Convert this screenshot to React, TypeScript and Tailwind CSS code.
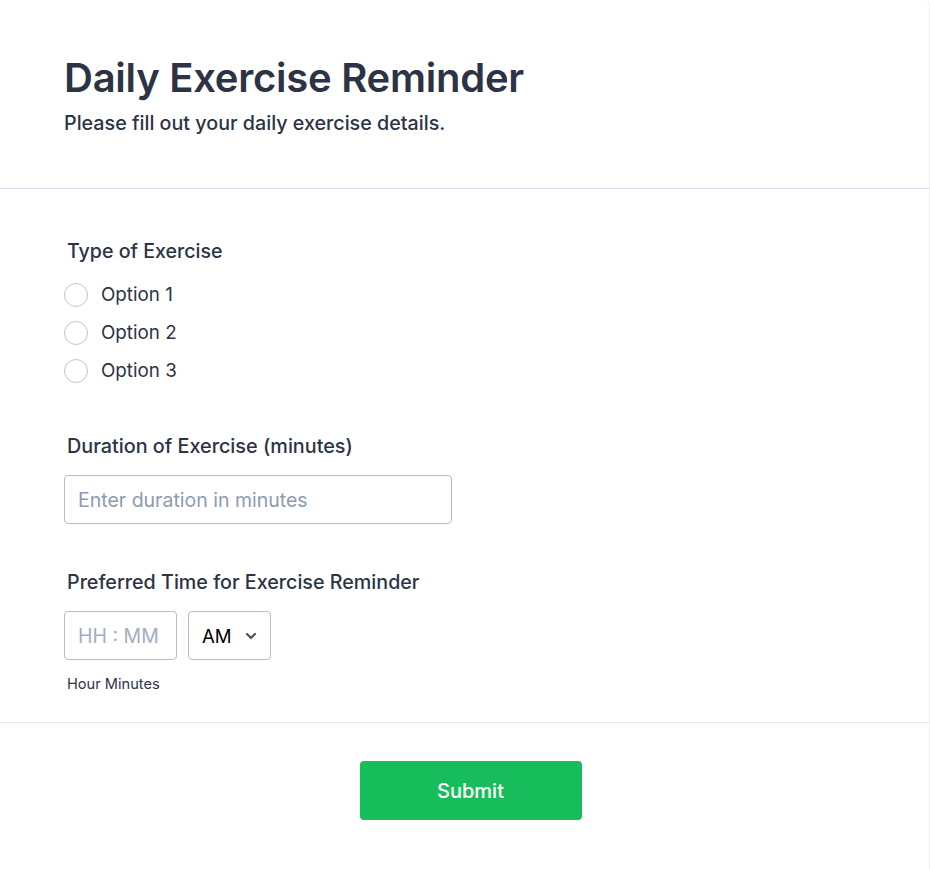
import React from "react";

export default function App() {
  return (
    <div className="min-h-screen bg-white font-['Inter',sans-serif] text-[#2c3345] border-r border-[#eeeef3] rounded-tr-md">
      <header className="px-16 pt-[54px] pb-[51px] border-b border-[#dcdcec]">
        <h1 className="text-[40px] leading-[48px] font-semibold tracking-[-0.25px]">Daily Exercise Reminder</h1>
        <p className="text-[19.7px] leading-[28px] font-medium mt-[7px]">Please fill out your daily exercise details.</p>
      </header>

      <section className="px-16 pt-[50px] pb-[28px] border-b border-[#e6e8ee]">
        <div className="pl-[3px] text-[19.6px] leading-[24px] font-medium">Type of Exercise</div>
        <div className="mt-[13px] flex flex-col">
          {["Option 1", "Option 2", "Option 3"].map((o) => (
            <label key={o} className="h-[38px] flex items-center gap-[13px] text-[18.8px]">
              <span className="w-6 h-6 rounded-full border border-[#bfc4d0] bg-white" />
              <span>{o}</span>
            </label>
          ))}
        </div>

        <div className="mt-[44px] pl-[3px] text-[19.8px] leading-[24px] font-medium">Duration of Exercise (minutes)</div>
        <div className="mt-[17px] w-[388px] h-[49px] rounded border border-[#b8bdc9] flex items-center px-[13px] pt-[3px] text-[19.5px] text-[#8f9ab0]">
          Enter duration in minutes
        </div>

        <div className="mt-[46px] pl-[3px] text-[19.7px] leading-[24px] font-medium">Preferred Time for Exercise Reminder</div>
        <div className="mt-[17px] flex gap-[11px]">
          <div className="w-[113px] h-[49px] rounded border border-[#b8bdc9] flex items-center px-[13px] pt-[3px] text-[19.5px] text-[#a3adc0]">
            HH : MM
          </div>
          <div className="w-[83px] h-[49px] rounded border border-[#b8bdc9] flex items-center justify-between pl-[13px] pr-[13px] text-[18.6px] text-black">
            <span className="pt-[3px]">AM</span>
            <svg width="12" height="8" viewBox="0 0 12 8" fill="none" stroke="#4b5563" strokeWidth="2.2" strokeLinecap="round" strokeLinejoin="round">
              <path d="M2 2l4 4 4-4" />
            </svg>
          </div>
        </div>
        <div className="mt-[14px] pl-[3px] text-[14.6px] leading-[20px]">Hour Minutes</div>
      </section>

      <div className="flex justify-center pl-[12px] pt-[38px] pb-[48px]">
        <button className="w-[222px] h-[59px] rounded bg-[#18bd5b] text-white text-[20px] font-medium">Submit</button>
      </div>
    </div>
  );
}
